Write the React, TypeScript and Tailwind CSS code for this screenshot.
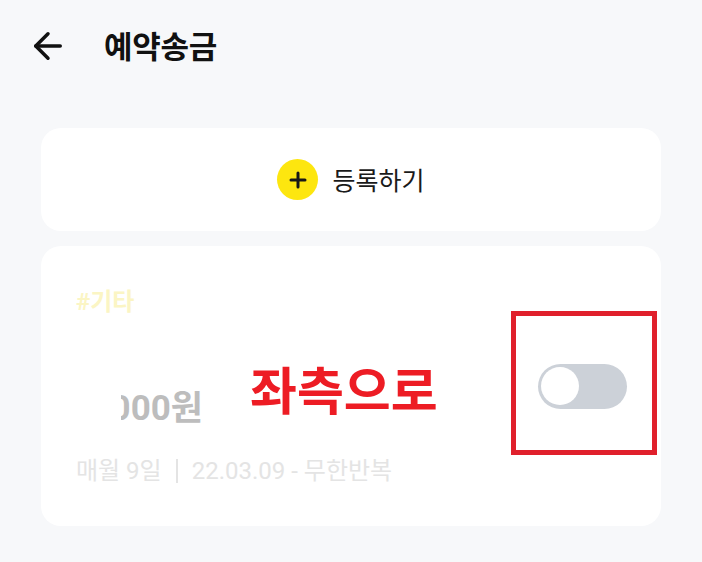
import { ArrowLeft } from 'lucide-react';

const font = "font-['Noto_Sans_CJK_KR','Noto_Sans',sans-serif]";
const numFont = "font-['Roboto','Noto_Sans_CJK_KR',sans-serif]";

export default function App() {
  return (
    <div className={`relative h-[562px] w-[702px] overflow-hidden bg-[#f7f8fa] ${font}`}>
      <header className="flex h-[92px] items-center pl-[27px]">
        <ArrowLeft className="h-[42px] w-[42px] text-[#111]" strokeWidth={2} />
        <h1 className="mb-[3px] ml-[35px] text-[31px] font-semibold leading-none tracking-[-0.25px] text-[#111]">예약송금</h1>
      </header>

      <div className="mx-[41px] mt-[36px] flex flex-col gap-[15px]">
        <div className="flex h-[103px] items-center justify-center gap-[14px] rounded-[20px] bg-white">
          <span className="flex h-[41px] w-[41px] items-center justify-center rounded-full bg-[#fde60f]">
            <svg viewBox="0 0 18 18" className="h-[18px] w-[18px]" fill="none" stroke="#171717" strokeWidth="3" strokeLinecap="round">
              <path d="M9 2v14M2 9h14" />
            </svg>
          </span>
          <span className="text-[25px] leading-none text-[#1a1a1a]">등록하기</span>
        </div>

        <div className="flex h-[280px] items-center justify-between rounded-[20px] bg-white pl-[35px] pr-[34px]">
          <div className={`flex flex-col ${numFont}`}>
            <span className="text-[24px] font-bold leading-none text-[#fbf5c4]">#기타</span>
            <div className="ml-[45px] mt-[77px] flex w-[82px] justify-end overflow-hidden">
              <span className="whitespace-nowrap text-[35px] font-bold leading-none text-[#bdbdbd]">10,000원</span>
            </div>
            <div className="mt-[33px] flex items-center whitespace-nowrap text-[24px] leading-none text-[#e4e4e4]">
              <span>매월 9일</span>
              <span className="mx-[14px] h-[24px] w-[2px] bg-[#e4e4e4]" />
              <span>22.03.09 - 무한반복</span>
            </div>
          </div>
          <div className="flex h-[45px] w-[89px] items-center rounded-full bg-[#ccd1d8] pl-[3px]">
            <span className="h-[38px] w-[38px] rounded-full bg-white" />
          </div>
        </div>
      </div>

      <span className="absolute left-[250px] top-[359px] whitespace-nowrap text-[51px] font-bold leading-[1.15] text-[#ed1c24]">좌측으로</span>
      <div className="absolute left-[511px] top-[311px] h-[144px] w-[146px] border-[5px] border-[#e0202c]" />
    </div>
  );
}
